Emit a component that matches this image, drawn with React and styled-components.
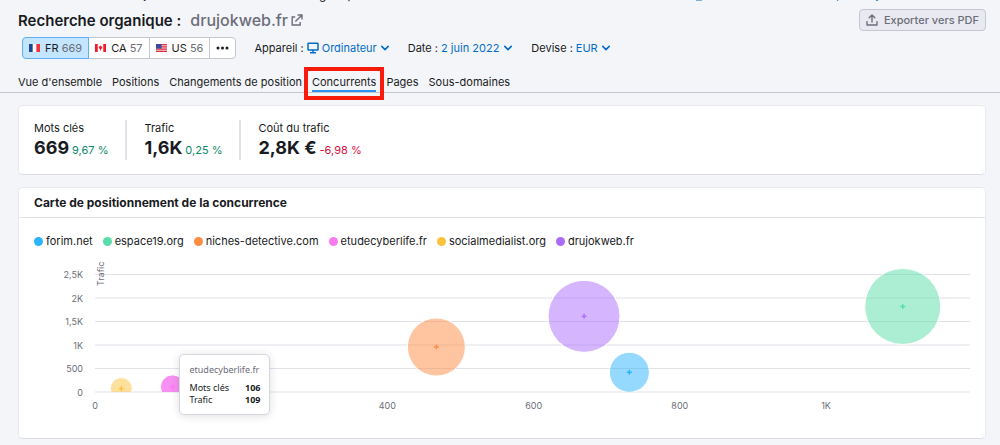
import React from "react";
import styled, { createGlobalStyle } from "styled-components";

const c = {
  page: "#f4f5f9",
  text: "#191b23",
  muted: "#6c6e79",
  line: "#e0e1e9",
  border: "#c4c7cf",
  link: "#006dca",
  up: "#0a8a68",
  down: "#d5103f",
};

const GlobalStyle = createGlobalStyle`
  *, *::before, *::after { box-sizing: border-box; }
  body {
    margin: 0;
    background: ${c.page};
    color: ${c.text};
    font-family: Inter, "Liberation Sans", sans-serif;
    font-size: 12px;
    line-height: 16px;
  }
  button, select { font: inherit; color: inherit; }
  a { color: inherit; text-decoration: none; }
`;

const Header = styled.header`
  border-bottom: 1px solid ${c.border};
  padding: 0 14px 0 18px;
`;

const Utility = styled.div`
  display: flex;
  justify-content: space-between;
  align-items: flex-end;
  height: 3px;
  overflow: hidden;
  padding-right: 88px;
  white-space: nowrap;
`;

const Crumbs = styled.nav`
  display: flex;
  gap: 5px;
`;

const HelpLink = styled.a`
  display: flex;
  align-items: center;
  gap: 9px;
  color: ${c.link};
`;

const TitleRow = styled.div`
  display: flex;
  justify-content: space-between;
  align-items: center;
  height: 28px;
  padding-top: 6px;
`;

const Title = styled.h1`
  display: flex;
  align-items: baseline;
  gap: 9px;
  margin: 0;
  font-size: 15px;
  line-height: 22px;
  font-weight: 600;
`;

const Domain = styled.a`
  display: flex;
  align-items: center;
  gap: 3px;
  color: ${c.muted};
  font-size: 16px;
  font-weight: 500;
`;

const ExportButton = styled.button`
  display: flex;
  align-items: center;
  gap: 6px;
  height: 22px;
  padding: 0 6px;
  border: 1px solid ${c.border};
  border-radius: 4px;
  background: #e9eaf1;
  color: ${c.muted};
  font-size: 11px;
  font-weight: 500;
`;

const Filters = styled.div`
  display: flex;
  align-items: center;
  gap: 18px;
  padding: 6px 0 0 4px;
`;

const Chips = styled.div`
  display: flex;
  height: 22px;
  font-size: 11px;
`;

const Chip = styled.button`
  display: flex;
  align-items: center;
  gap: 5px;
  padding: 0 6px;
  margin-left: -1px;
  position: relative;
  z-index: ${(p) => (p.$active ? 1 : 0)};
  border: 1px solid ${(p) => (p.$active ? "#5db0f2" : c.border)};
  background: ${(p) => (p.$active ? "#c4e5fe" : "#fff")};
  white-space: nowrap;
  &:first-child { margin-left: 0; border-radius: 4px 0 0 4px; }
  &:last-child { border-radius: 0 4px 4px 0; }
`;

const Count = styled.span`
  color: ${c.muted};
`;

const Filter = styled.div`
  display: flex;
  align-items: center;
  gap: 3px;
  font-size: 11px;
  white-space: nowrap;
`;

const Picker = styled.span`
  display: flex;
  align-items: center;
  gap: 3px;
  color: ${c.link};
`;

const Select = styled.select`
  appearance: none;
  field-sizing: content;
  border: 0;
  padding: 0;
  background: none;
`;

const PlainButton = styled.button`
  display: flex;
  align-items: center;
  gap: 4px;
  padding: 0;
  border: 0;
  background: none;
  color: ${c.link};
`;

const Tabs = styled.nav`
  display: flex;
  gap: 10px;
  padding-top: 14px;
  font-size: 11px;
`;

const Tab = styled.a`
  position: relative;
  height: 19px;
  line-height: 18px;
  white-space: nowrap;
  border-bottom: 2px solid ${(p) => (p.$active ? "#2a94f4" : "transparent")};
`;

const Highlight = styled.span`
  position: absolute;
  inset: -6px -8px -10px;
  border: 4px solid #f81b0c;
  pointer-events: none;
`;

const Main = styled.main`
  display: flex;
  flex-direction: column;
  gap: 12px;
  padding: 12px 14px 7px 18px;
`;

const Card = styled.section`
  background: #fff;
  border: 1px solid #e9eaf0;
  border-bottom-color: #d9dbe3;
  border-radius: 5px;
`;

const Stats = styled(Card)`
  display: flex;
  padding: 14px 15px;
`;

const Stat = styled.div`
  padding-right: 17px;
  margin-right: 17px;
  border-right: 2px solid ${c.line};
  height: 40px;
  &:last-child { border: 0; }
`;

const StatLabel = styled.div`
  font-size: 11px;
  line-height: 16px;
`;

const StatLine = styled.div`
  display: flex;
  align-items: baseline;
  gap: 3px;
  line-height: 24px;
`;

const StatValue = styled.strong`
  font-size: 18px;
  font-weight: 700;
`;

const Change = styled.span`
  font-size: 11px;
  color: ${(p) => (p.$down ? c.down : c.up)};
`;

const CardTitle = styled.h2`
  margin: 0;
  padding: 6px 15px;
  border-bottom: 1px solid ${c.line};
  font-size: 12px;
  line-height: 17px;
  font-weight: 700;
`;

const Legend = styled.ul`
  display: flex;
  flex-wrap: wrap;
  gap: 10px;
  margin: 0;
  padding: 15px 15px 7px;
  list-style: none;
  font-size: 11px;
`;

const LegendItem = styled.li`
  display: flex;
  align-items: center;
  gap: 3px;
  &::before {
    content: "";
    width: 9px;
    height: 9px;
    border-radius: 50%;
    background: ${(p) => p.$color};
  }
`;

const Chart = styled.div`
  display: flex;
  gap: 12px;
  padding: 0 15px 20px;
`;

const YAxis = styled.div`
  display: flex;
  flex-direction: column;
  justify-content: space-between;
  align-items: flex-end;
  width: 49px;
  height: 134px;
  margin-top: 11px;
  color: ${c.muted};
  font-size: 9px;
`;

const Plot = styled.div`
  position: relative;
  flex: 1;
  height: 162px;
`;

const PlotSvg = styled.svg`
  display: block;
  overflow: visible;
  font-size: 9px;
  fill: ${c.muted};
`;

const Tooltip = styled.div`
  position: absolute;
  top: 98px;
  width: 91px;
  margin-left: 7px;
  padding: 8px 9px;
  border: 1px solid #d5d7de;
  border-radius: 5px;
  background: #fff;
  box-shadow: 0 1px 8px rgba(25, 27, 35, 0.14);
  font-family: "Noto Sans", sans-serif;
  font-size: 9px;
  line-height: 12px;
`;

const TooltipTitle = styled.div`
  margin-bottom: 5px;
  line-height: 14px;
  color: ${c.muted};
`;

const TooltipRow = styled.div`
  display: flex;
  justify-content: space-between;
`;

const sites = [
  { name: "forim.net", color: "#2bb3ff", x: 731, y: 419, r: 20 },
  { name: "espace19.org", color: "#59ddaa", x: 1105, y: 1820, r: 38 },
  { name: "niches-detective.com", color: "#ff8c43", x: 467, y: 957, r: 29 },
  { name: "etudecyberlife.fr", color: "#f67cf0", x: 106, y: 109, r: 12, hover: true },
  { name: "socialmedialist.org", color: "#fdc23c", x: 36, y: 72, r: 11 },
  { name: "drujokweb.fr", color: "#ab6cfe", x: 669, y: 1610, r: 36 },
];

const X_MAX = 1197;
const Y_MAX = 2500;
const TOP = 18.5;
const RANGE = 117.5;
const xPos = (v) => `${(v / X_MAX) * 100}%`;
const yPos = (v) => TOP + RANGE * (1 - v / Y_MAX);

const Chevron = () => (
  <svg width="10" height="10" viewBox="0 0 10 10" fill="none" stroke={c.link} strokeWidth="1.6" strokeLinecap="round" strokeLinejoin="round" aria-hidden="true">
    <path d="M1.8 3.4 5 6.6 8.2 3.4" />
  </svg>
);

const Monitor = () => (
  <svg width="12" height="12" viewBox="0 0 12 12" fill="none" stroke={c.link} strokeWidth="1.5" aria-hidden="true">
    <rect x="1" y="1.2" width="10" height="6.8" rx="0.6" />
    <path d="M6 8v2.6M3 10.8h6" />
  </svg>
);

const External = () => (
  <svg width="12" height="12" viewBox="0 0 12 12" fill="none" stroke={c.muted} strokeWidth="1.4" aria-hidden="true">
    <path d="M4.2 3H1.2v8h8V8M6.6 1h4.4v4.4M11 1 4.4 7.6" />
  </svg>
);

const Upload = () => (
  <svg width="12" height="12" viewBox="0 0 12 12" fill="none" stroke={c.muted} strokeWidth="1.4" strokeLinecap="round" strokeLinejoin="round" aria-hidden="true">
    <path d="M6 8V1.2M3.2 3.8 6 1l2.8 2.8M1 7.6V11h10V7.6" />
  </svg>
);

const flags = {
  FR: (
    <>
      <path fill="#fff" d="M0 0h12v9H0z" />
      <path fill="#1f4397" d="M0 0h4v9H0z" />
      <path fill="#f2323c" d="M8 0h4v9H8z" />
    </>
  ),
  CA: (
    <>
      <path fill="#fff" d="M0 0h12v9H0z" />
      <path fill="#f01f2b" d="M0 0h3v9H0zM9 0h3v9H9zM6 1.5l.8 1.2.9-.2-.2 1.1.8.7L6.5 5.8V7.2h-1V5.8L3.7 4.3l.8-.7-.2-1.1.9.2z" />
    </>
  ),
  US: (
    <>
      <path fill="#f3d5d8" d="M0 0h12v9H0z" />
      <path fill="#e0303f" d="M0 0h12v1.3H0zM0 2.6h12v1.3H0zM0 5.2h12v1.3H0zM0 7.7h12V9H0z" />
      <path fill="#3b4a9c" d="M0 0h6v5.2H0z" />
    </>
  ),
};

const Flag = ({ code }) => (
  <svg width="11" height="8" viewBox="0 0 12 9" preserveAspectRatio="none" aria-hidden="true">{flags[code]}</svg>
);

const countries = [
  { code: "FR", count: 669 },
  { code: "CA", count: 57 },
  { code: "US", count: 56 },
];

const tabs = ["Vue d'ensemble", "Positions", "Changements de position", "Concurrents", "Pages", "Sous-domaines"];

const stats = [
  { label: "Mots clés", value: "669", change: "9,67 %" },
  { label: "Trafic", value: "1,6K", change: "0,25 %" },
  { label: "Coût du trafic", value: "2,8K €", change: "-6,98 %", down: true },
];

const xTicks = [[0, "0"], [400, "400"], [600, "600"], [800, "800"], [1000, "1K"]];
const yTicks = [[2500, "2,5K"], [2000, "2K"], [1500, "1,5K"], [1000, "1K"], [500, "500"], [0, "0"]];

export default function App() {
  const hovered = sites.find((s) => s.hover);
  return (
    <>
      <GlobalStyle />
      <Header>
        <Utility>
          <Crumbs aria-label="Fil d'Ariane">
            <a href="#accueil">Tableau de bord</a>
            <span>›</span>
            <a href="#projets">Projets</a>
            <span>›</span>
            <a href="#domaine">Domaine</a>
            <span>›</span>
            <span>Recherche organique</span>
          </Crumbs>
          <HelpLink href="#aide"><Monitor />Données concurrents, mis à jour</HelpLink>
        </Utility>
        <TitleRow>
          <Title>
            Recherche organique :
            <Domain href="#drujokweb">drujokweb.fr<External /></Domain>
          </Title>
          <ExportButton type="button"><Upload />Exporter vers PDF</ExportButton>
        </TitleRow>
        <Filters>
          <Chips>
            {countries.map(({ code, count }, i) => (
              <Chip key={code} type="button" $active={i === 0} aria-pressed={i === 0}>
                <Flag code={code} />
                <span>{code} <Count>{count}</Count></span>
              </Chip>
            ))}
            <Chip type="button" aria-label="Plus de pays">
              <svg width="13" height="4" viewBox="0 0 13 4" fill={c.text} aria-hidden="true">
                <circle cx="2" cy="2" r="1.5" /><circle cx="6.5" cy="2" r="1.5" /><circle cx="11" cy="2" r="1.5" />
              </svg>
            </Chip>
          </Chips>
          <Filter>
            <label htmlFor="device">Appareil :</label>
            <Picker>
              <Monitor />
              <Select id="device"><option>Ordinateur</option></Select>
              <Chevron />
            </Picker>
          </Filter>
          <Filter>
            <span id="date-label">Date :</span>
            <PlainButton type="button" aria-describedby="date-label">2 juin 2022<Chevron /></PlainButton>
          </Filter>
          <Filter>
            <label htmlFor="currency">Devise :</label>
            <Picker>
              <Select id="currency"><option>EUR</option></Select>
              <Chevron />
            </Picker>
          </Filter>
        </Filters>
        <Tabs>
          {tabs.map((t) => {
            const active = t === "Concurrents";
            return (
              <Tab key={t} href={`#${t}`} $active={active} aria-current={active ? "page" : undefined}>
                {t}
                {active && <Highlight />}
              </Tab>
            );
          })}
        </Tabs>
      </Header>
      <Main>
        <Stats>
          {stats.map((s) => (
            <Stat key={s.label}>
              <StatLabel>{s.label}</StatLabel>
              <StatLine>
                <StatValue>{s.value}</StatValue>
                <Change $down={s.down}>{s.change}</Change>
              </StatLine>
            </Stat>
          ))}
        </Stats>
        <Card>
          <CardTitle>Carte de positionnement de la concurrence</CardTitle>
          <Legend>
            {sites.map((s) => <LegendItem key={s.name} $color={s.color}>{s.name}</LegendItem>)}
          </Legend>
          <Chart>
            <YAxis>
              {yTicks.map(([v, label]) => <span key={v}>{label}</span>)}
            </YAxis>
            <Plot>
              <PlotSvg width="100%" height="162" role="img" aria-label="Carte de positionnement">
                <defs>
                  <clipPath id="plot-area"><rect x="0" y="0" width="3000" height={yPos(0)} /></clipPath>
                </defs>
                {yTicks.map(([v]) => (
                  <line key={v} x1="0" x2="100%" y1={yPos(v)} y2={yPos(v)} stroke={c.line} />
                ))}
                <text transform="rotate(-90)" x="-30" y="9">Trafic</text>
                <g clipPath="url(#plot-area)">
                  {sites.map((s) => (
                    <circle key={s.name} cx={xPos(s.x)} cy={yPos(s.y)} r={s.r} fill={s.color} fillOpacity={s.hover ? 0.85 : 0.5} stroke="#fff" />
                  ))}
                </g>
                {sites.map((s) => (
                  <svg key={s.name} x={xPos(s.x)} y={yPos(s.y)} overflow="visible">
                    <path d="M-2.5 0h5M0-2.5v5" stroke={s.color} strokeWidth="1.4" />
                  </svg>
                ))}
                {xTicks.map(([v, label]) => (
                  <text key={v} x={xPos(v)} y="153" textAnchor="middle">{label}</text>
                ))}
              </PlotSvg>
              <Tooltip role="tooltip" style={{ left: xPos(hovered.x) }}>
                <TooltipTitle>{hovered.name}</TooltipTitle>
                <TooltipRow><span>Mots clés</span><strong>{hovered.x}</strong></TooltipRow>
                <TooltipRow><span>Trafic</span><strong>{hovered.y}</strong></TooltipRow>
              </Tooltip>
            </Plot>
          </Chart>
        </Card>
      </Main>
    </>
  );
}
